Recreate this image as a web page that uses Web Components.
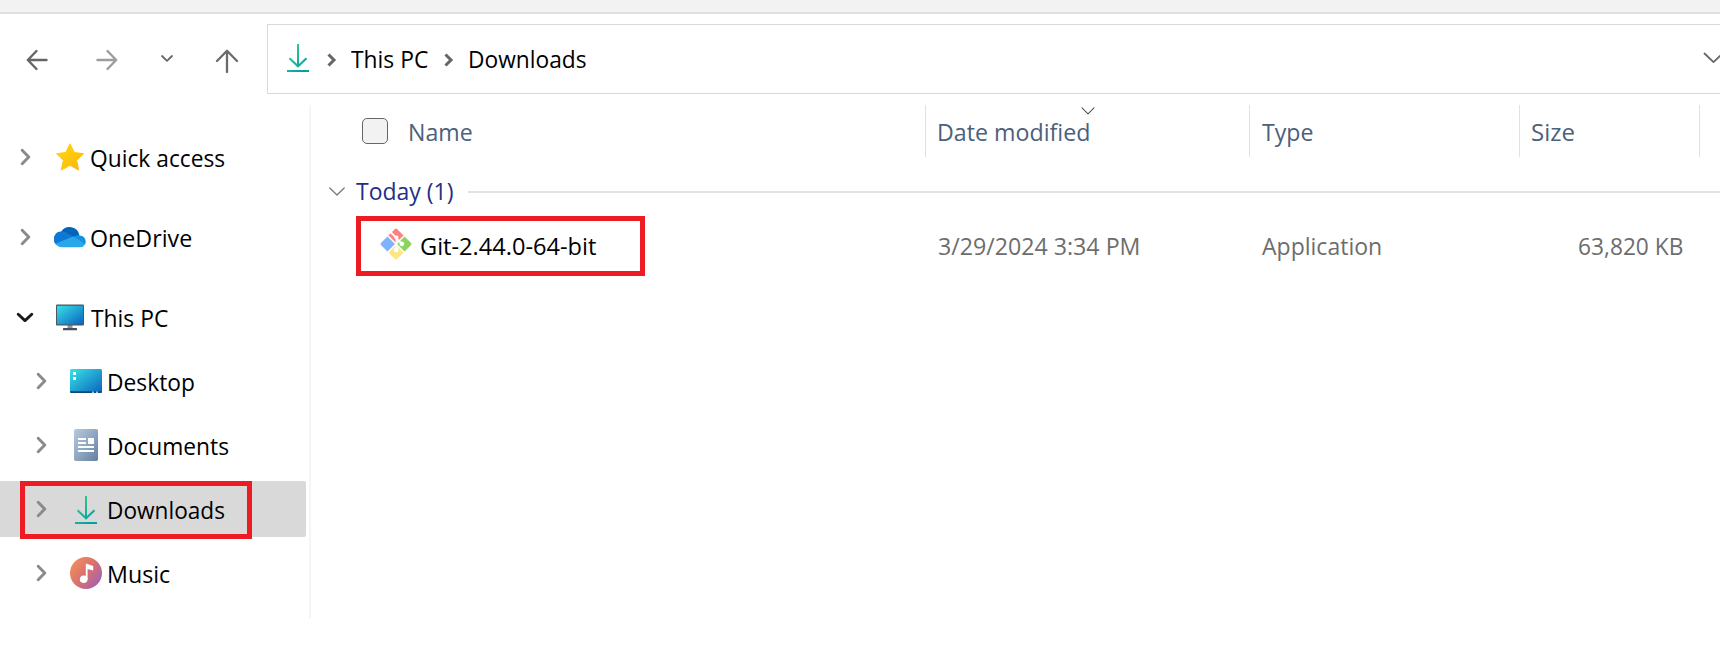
<!DOCTYPE html>
<html lang="en">
<head>
<meta charset="utf-8">
<title>Downloads</title>
<style>
html,body{margin:0;height:100%;overflow:hidden;background:#fff}
body{font-family:"Open Sans","Noto Sans",sans-serif;font-size:23.5px;color:#000}
</style>
</head>
<body>
<file-explorer></file-explorer>
<script>
const define=(name,html,extra={})=>customElements.define(name,class extends HTMLElement{
  constructor(){super();this.attachShadow({mode:'open'}).innerHTML=html;}
  connectedCallback(){extra.connected&&extra.connected.call(this,this.shadowRoot);}
});

/* Text run whose drawn glyphs span exactly the given width. */
const ctx=document.createElement('canvas').getContext('2d');
class UiLabel extends HTMLElement{
  connectedCallback(){
    const text=this.getAttribute('text'),w=+this.getAttribute('width');
    ctx.font='23.5px "Open Sans","Noto Sans",sans-serif';
    const m=ctx.measureText(text),k=w/(m.actualBoundingBoxLeft+m.actualBoundingBoxRight);
    this.attachShadow({mode:'open'}).innerHTML=`<style>
      :host{display:block;flex:none;width:${w}px;height:34px;line-height:34px;white-space:pre}
      span{display:inline-block;transform-origin:0 50%;transform:translateX(${m.actualBoundingBoxLeft*k}px) scaleX(${k})}
      </style><span></span>`;
    this.shadowRoot.querySelector('span').textContent=text;
  }
}
customElements.define('ui-label',UiLabel);

const line=(w,h,d,c,s)=>`<svg width="${w}" height="${h}" viewBox="0 0 ${w} ${h}" fill="none" stroke="${c}" stroke-width="${s}" stroke-linecap="round" stroke-linejoin="round"><path d="${d}"/></svg>`;
const ICONS={
 back:line(22,22,'M20.5 11H2M10.5 2L1.8 11l8.7 9','#666',2.4),
 forward:line(22,22,'M1.5 11H20M11.5 2l8.7 9-8.7 9','#9d9d9d',2.4),
 recent:line(14,9,'M2 2l5 4.8L12 2','#666',1.8),
 up:line(24,24,'M12 23V2M2 12L12 1.8 22 12','#6b6b6b',2.3),
 closed:line(11,18,'M2.2 2.2L8.8 9l-6.6 6.8','#8a8a8a',2.9),
 open:line(18,11,'M2.2 2.2L9 8.6l6.8-6.4','#1b1b1b',2.9),
 crumb:`<svg width="10" height="14" fill="none" stroke="#666" stroke-width="3"><path d="M1.5 1.5L7 7l-5.5 5.5"/></svg>`,
 drop:line(20,12,'M1.5 1.5l9 8.6 9-8.6','#666',1.8),
 sort:line(14,8,'M1 .8l6 6 6-6','#555',1.1),
 group:line(16,10,'M.8 1L8 8l7.2-7','#777',1.3),
 download:`<svg width="32" height="32" viewBox="0 0 32 32" fill="none" stroke-width="2"><defs><linearGradient id="d" gradientUnits="userSpaceOnUse" x1="6" y1="8" x2="25" y2="26"><stop stop-color="#35cd88"/><stop offset="1" stop-color="#069da5"/></linearGradient></defs><path stroke="url(#d)" d="M16 3v22M7.5 17.3l8.5 8 8.5-8M5 30h22"/></svg>`,
 star:`<svg width="32" height="32" viewBox="0 0 32 32"><defs><linearGradient id="s" x1="0" y1="0" x2="1" y2="1"><stop stop-color="#ffda13"/><stop offset="1" stop-color="#fdb309"/></linearGradient></defs><path fill="url(#s)" stroke="url(#s)" stroke-linejoin="round" d="M16 2.8l4.3 8.7 9.2 1.2-6.8 6.5 1.8 9.8L16 24.3 7.4 29l1.9-9.8-6.8-6.5 9.2-1.2z"/></svg>`,
 cloud:`<svg width="32" height="32" viewBox="0 0 32 32"><path fill="#0364b8" d="M7 11a10 10 0 0 1 18.5 3.5L20 19 9 15z"/><path fill="#0f78d4" d="M2 23.5a7.6 7.6 0 0 1 6-13 10 10 0 0 1 5 1.4L21 16.5 15 20z"/><path fill="#1490df" d="M19 15.7l2.6-1c1.2-.5 2.6-.6 3.9-.3a6.3 6.3 0 0 1 5.4 9.4z"/><path fill="#28a8ea" d="M1.4 22.7L19.2 15.6l11.9 7.8A6.5 6.5 0 0 1 26 26.2H8a8 8 0 0 1-6.6-3.5z"/></svg>`,
 pc:`<svg width="32" height="32" viewBox="0 0 32 32"><defs><linearGradient id="p" x1="0" y1="0" x2="1" y2="1"><stop stop-color="#37e0e8"/><stop offset="1" stop-color="#0c62bd"/></linearGradient></defs><path fill="#8a98a5" d="M13.5 24h5v4h-5z"/><rect x="9" y="27" width="14" height="2.3" rx=".5" fill="#45505b"/><rect x="2" y="3.5" width="28" height="21" rx="1" fill="#4d565f"/><rect x="3" y="4.8" width="26" height="18.5" fill="url(#p)"/></svg>`,
 desktop:`<svg width="32" height="32" viewBox="0 0 32 32"><defs><linearGradient id="k" x1="0" y1="0" x2="1" y2="1"><stop stop-color="#37e4e8"/><stop offset="1" stop-color="#0b62bd"/></linearGradient></defs><rect y="4" width="32" height="24" rx="1.4" fill="url(#k)"/><path fill="#0b4a78" d="M0 26.2h32v.6a1.2 1.2 0 0 1-1.2 1.2H1.2A1.2 1.2 0 0 1 0 26.8z"/><path fill="#fff" d="M3 7h3v3H3zM3 12h3v3H3z"/><path fill="#9fc4da" d="M22 26.4h2V28h-2zM26 26.4h2V28h-2z"/></svg>`,
 documents:`<svg width="32" height="32" viewBox="0 0 32 32"><defs><linearGradient id="o" x1="0" y1="0" x2="1" y2="1"><stop stop-color="#b7c9dc"/><stop offset=".5" stop-color="#8ea8c3"/><stop offset="1" stop-color="#64809f"/></linearGradient></defs><rect x="4" width="24" height="32" rx="1.8" fill="url(#o)"/><path fill="#fff" d="M8 9h8v1.9H8zM8 13h8v1.9H8zM18 9h6v6h-6zM8 17h16v1.9H8zM8 21h16v1.9H8z"/></svg>`,
 music:`<svg width="32" height="32" viewBox="0 0 32 32"><defs><linearGradient id="m" x1="0" y1=".1" x2="1" y2=".9"><stop stop-color="#f5925a"/><stop offset=".5" stop-color="#d9706f"/><stop offset="1" stop-color="#9b5fbd"/></linearGradient></defs><circle cx="16" cy="16" r="16" fill="url(#m)"/><circle cx="13.7" cy="22.3" r="3.8" fill="#fff"/><path fill="#fff" d="M15.8 6.5l7.4 2.4v4.6l-5.6-1.6v10.5h-1.8z"/></svg>`,
 git:`<svg width="32" height="32" viewBox="0 0 32 32"><defs><clipPath id="g"><rect x="4.6" y="4.6" width="22.8" height="22.8" rx="1.8" transform="rotate(45 16 16)"/></clipPath></defs><g clip-path="url(#g)"><path fill="#ff8080" d="M16 16L6 6V0h20v6z"/><path fill="#80b3ff" d="M16 16L6 6H0v20h6z"/><path fill="#ffe680" d="M16 16L6 26v6h20v-6z"/><path fill="#8dd35f" d="M16 16L26 6h6v20h-6z"/></g><path stroke="#fff" stroke-width="1.5" fill="none" d="M6 6l20 20M26 6L6 26"/><path stroke="#fff" stroke-width="1.8" fill="none" d="M11 4.5l5.5 5.5V22M16.5 10.5l5 5"/><g fill="#fff"><circle cx="16.5" cy="9.6" r="2"/><circle cx="21.8" cy="15.8" r="2.4"/><circle cx="16.3" cy="22" r="2.4"/></g></svg>`
};
class UiIcon extends HTMLElement{
  connectedCallback(){this.attachShadow({mode:'open'}).innerHTML='<style>:host{display:block;flex:none;line-height:0}svg{display:block}</style>'+ICONS[this.getAttribute('name')];}
}
customElements.define('ui-icon',UiIcon);

define('callout-frame','<style>:host{display:block;position:absolute;box-sizing:border-box;border:5px solid #ed1c24;pointer-events:none}</style>');

define('nav-bar',`<style>
:host{display:flex;height:79px;padding-top:10px;box-sizing:border-box;align-items:flex-start}
.b{display:flex;width:267px;flex:none;height:70px}
.b ui-icon:nth-child(1){margin:25px 0 0 26px}
.b ui-icon:nth-child(2){margin:25px 0 0 48px}
.b ui-icon:nth-child(3){margin:30px 0 0 42px}
.b ui-icon:nth-child(4){margin:25px 0 0 41px}
.a{flex:1;height:70px;box-sizing:border-box;border:1px solid #d9d9d9;border-right:0;display:flex;align-items:center;overflow:hidden}
.a ui-label{margin-top:-1px}
</style><div class="b"><ui-icon name="back"></ui-icon><ui-icon name="forward"></ui-icon><ui-icon name="recent"></ui-icon><ui-icon name="up"></ui-icon></div>
<div class="a"><ui-icon name="download" style="margin:-4px 0 0 14px"></ui-icon><ui-icon name="crumb" style="margin:2px 0 0 12.5px"></ui-icon><ui-label text="This PC" width="77.5" style="margin-left:14.5px"></ui-label><ui-icon name="crumb" style="margin:2px 0 0 15px"></ui-icon><ui-label text="Downloads" width="116.3" style="margin-left:16.3px"></ui-label><ui-icon name="drop" style="margin:-2px -3px 0 auto"></ui-icon></div>`);

class TreeItem extends HTMLElement{
  connectedCallback(){
    const g=n=>this.getAttribute(n),child=this.hasAttribute('child'),open=this.hasAttribute('open');
    this.attachShadow({mode:'open'}).innerHTML=`<style>
    :host{display:flex;align-items:center;height:56px;width:306px;border-radius:0 2px 2px 0;margin-bottom:${child?8:24}px;box-sizing:border-box;padding-left:${child?32:16}px;position:relative}
    :host([open]){margin-bottom:8px}
    :host([selected]){background:#d9d9d9}
    .c{width:18px;display:flex;justify-content:center;margin-right:20px}
    ui-label{margin:2px 0 0 ${child?7:5.3}px}
    callout-frame{left:20px;top:0;width:232px;height:58px}
    </style><div class="c"><ui-icon name="${open?'open':'closed'}"></ui-icon></div><ui-icon name="${g('icon')}"></ui-icon><ui-label text="${g('label')}" width="${g('width')}"></ui-label>${this.hasAttribute('selected')?'<callout-frame></callout-frame>':''}`;
  }
}
customElements.define('tree-item',TreeItem);

define('folder-tree',`<style>:host{display:block;width:309px;height:513px;padding-top:24px;box-sizing:border-box;border-right:0;flex:none}</style><slot></slot>`);

define('column-head',`<style>:host{display:flex;height:52px;box-sizing:border-box;border-right:1px solid #e1e1e1;color:#4c607a;position:relative}
::slotted(ui-label){margin-top:10px}
i{position:absolute;top:29px;width:1px;height:1px;background:#f3f3f3}
</style><slot></slot><i style="right:22px"></i><i style="right:10px"></i>`);

define('file-list',`<style>
:host{display:block;flex:1;min-width:0;height:513px;border-left:2px solid #f5f5f5}
.h,.r{display:grid;grid-template-columns:615px 324px 270px 180px 1fr}
.box{width:26px;height:26px;box-sizing:border-box;border:1.5px solid #666;border-radius:5px;background:#f2f2f2;margin:13px 22px 0 51px;flex:none}
.g{display:flex;align-items:center;height:34px;margin-top:18px;padding-left:18px;color:#1f2f86}
.g hr{flex:1;height:2px;border:0;margin:0 0 0 15.7px;background:#e2e2e2}
.r{position:relative;height:60px;margin-top:7px;color:#6d6d6d}
.r ui-label{margin-top:13px}
.n{display:flex;color:#000}
callout-frame{left:45px;top:0;width:289px;height:60px}
</style>
<div class="h"><column-head><div class="box"></div><ui-label text="Name" width="61.5"></ui-label></column-head>
<column-head><ui-label text="Date modified" width="150" style="margin-left:13.4px"></ui-label><ui-icon name="sort" style="position:absolute;left:154.5px;top:2px"></ui-icon></column-head>
<column-head><ui-label text="Type" width="50.3" style="margin-left:12px"></ui-label></column-head>
<column-head><ui-label text="Size" width="41.7" style="margin-left:12.4px"></ui-label></column-head></div>
<div class="g"><ui-icon name="group"></ui-icon><ui-label text="Today (1)" width="96.6" style="margin:-2px 0 0 11px"></ui-label><hr></div>
<div class="r"><div class="n"><ui-icon name="git" style="margin:12px 0 0 69px"></ui-icon><ui-label text="Git-2.44.0-64-bit" width="175" style="margin-left:8.5px"></ui-label></div>
<ui-label text="3/29/2024 3:34 PM" width="199.3" style="margin-left:12.6px"></ui-label><ui-label text="Application" width="118.8" style="margin-left:12.3px"></ui-label><ui-label text="63,820 KB" width="103.2" style="margin-left:59.2px"></ui-label><callout-frame></callout-frame></div>`);

define('file-explorer',`<style>
:host{display:flex;flex-direction:column;width:100%;height:672px;background:#fff;overflow:hidden}
.t{height:12px;background:#f2f2f2;border-bottom:2px solid #dfdfdf;flex:none}
nav-bar{flex:none}
.m{display:flex;margin-top:12px}
</style><div class="t"></div><nav-bar></nav-bar><div class="m"><folder-tree>
<tree-item icon="star" label="Quick access" width="134"></tree-item>
<tree-item icon="cloud" label="OneDrive" width="100"></tree-item>
<tree-item open icon="pc" label="This PC" width="77.5"></tree-item>
<tree-item child icon="desktop" label="Desktop" width="85.5"></tree-item>
<tree-item child icon="documents" label="Documents" width="119.8"></tree-item>
<tree-item child selected icon="download" label="Downloads" width="115.8"></tree-item>
<tree-item child icon="music" label="Music" width="61"></tree-item>
</folder-tree><file-list></file-list></div>`);
</script>
</body>
</html>
